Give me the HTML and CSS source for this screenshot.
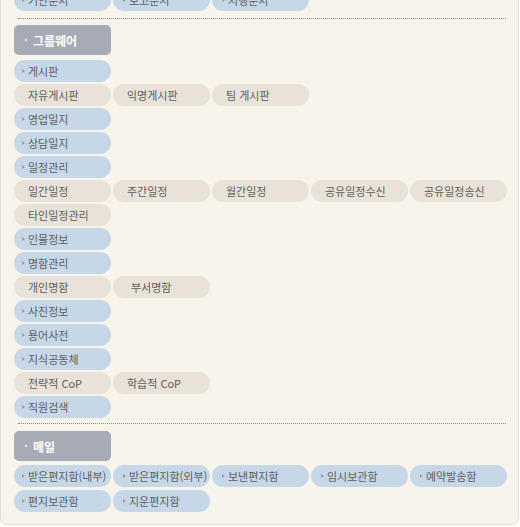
FILE: index.html
```html
<!DOCTYPE html>
<html lang="ko">
<head>
<meta charset="utf-8">
<link rel="stylesheet" href="styles.css">
</head>
<body>
<div class="panel">
  <div class="rows">
    <div class="row">
      <a class="pill blue"><span class="arr"></span>기안문서</a>
      <a class="pill blue"><span class="arr"></span>보고문서</a>
      <a class="pill blue"><span class="arr"></span>시행문서</a>
    </div>
  </div>

  <div class="sep"></div>

  <div class="section">
    <div class="head"><span class="dot"></span>그룹웨어</div>
    <div class="rows">
      <div class="row"><a class="pill blue"><span class="arr"></span>게시판</a></div>
      <div class="row">
        <a class="pill beige">자유게시판</a>
        <a class="pill beige">익명게시판</a>
        <a class="pill beige">팀 게시판</a>
      </div>
      <div class="row"><a class="pill blue"><span class="arr"></span>영업일지</a></div>
      <div class="row"><a class="pill blue"><span class="arr"></span>상담일지</a></div>
      <div class="row"><a class="pill blue"><span class="arr"></span>일정관리</a></div>
      <div class="row">
        <a class="pill beige">일간일정</a>
        <a class="pill beige">주간일정</a>
        <a class="pill beige">월간일정</a>
        <a class="pill beige">공유일정수신</a>
        <a class="pill beige">공유일정송신</a>
      </div>
      <div class="row"><a class="pill beige">타인일정관리</a></div>
      <div class="row"><a class="pill blue"><span class="arr"></span>인물정보</a></div>
      <div class="row"><a class="pill blue"><span class="arr"></span>명함관리</a></div>
      <div class="row">
        <a class="pill beige">개인명함</a>
        <a class="pill beige wide">부서명함</a>
      </div>
      <div class="row"><a class="pill blue"><span class="arr"></span>사진정보</a></div>
      <div class="row"><a class="pill blue"><span class="arr"></span>용어사전</a></div>
      <div class="row"><a class="pill blue"><span class="arr"></span>지식공동체</a></div>
      <div class="row">
        <a class="pill beige">전략적 CoP</a>
        <a class="pill beige">학습적 CoP</a>
      </div>
      <div class="row"><a class="pill blue"><span class="arr"></span>직원검색</a></div>
    </div>
  </div>

  <div class="sep"></div>

  <div class="section">
    <div class="head mailhead"><span class="dot"></span>메일</div>
    <div class="rows mail">
      <div class="row">
        <a class="pill blue"><span class="arr"></span>받은편지함(내부)</a>
        <a class="pill blue"><span class="arr"></span>받은편지함(외부)</a>
        <a class="pill blue"><span class="arr"></span>보낸편지함</a>
        <a class="pill blue"><span class="arr"></span>임시보관함</a>
        <a class="pill blue"><span class="arr"></span>예약발송함</a>
      </div>
      <div class="row">
        <a class="pill blue"><span class="arr"></span>편지보관함</a>
        <a class="pill blue"><span class="arr"></span>지운편지함</a>
      </div>
    </div>
  </div>
</div>
</body>
</html>
```

FILE: styles.css
```css
html, body {
  margin: 0;
  padding: 0;
  background: #ffffff;
}

body {
  font-family: "Noto Sans CJK KR", "Noto Sans", sans-serif;
  font-size: 11px;
  color: #5e5e5e;
}

.panel {
  width: 504px;
  margin-top: -11px;
  padding: 0 0 12px 13px;
  background: #f7f4ec;
  border: 1px solid #e2ded5;
  border-top: none;
  border-radius: 0 0 7px 7px;
  box-sizing: content-box;
}

.rows {
  display: flex;
  flex-direction: column;
  gap: 2px;
}

.row {
  display: flex;
  gap: 2px;
}

.pill {
  display: flex;
  align-items: center;
  width: 97px;
  height: 22px;
  border-radius: 11px;
  box-sizing: border-box;
  padding-left: 14px;
  white-space: nowrap;
  color: #5e5e5e;
  line-height: 1;
}

.pill.blue {
  background: #c6d8e8;
  padding-left: 8px;
}

.row .pill.blue + .pill.blue {
  padding-left: 10px;
}

.pill.beige {
  background: #e8e2d9;
}

.pill.beige.wide {
  padding-left: 18px;
}

.arr {
  display: inline-block;
  width: 0;
  height: 0;
  border-top: 2.5px solid transparent;
  border-bottom: 2.5px solid transparent;
  border-left: 3px solid #9a9ea4;
  margin-right: 3px;
}

.sep {
  margin: 7px 12px 6px 4px;
  border-top: 1px dotted #8a8a8a;
}

.head {
  display: flex;
  align-items: center;
  width: 97px;
  height: 30px;
  box-sizing: border-box;
  padding-left: 11px;
  background: #a7abb6;
  border-radius: 5px;
  color: #ffffff;
  font-size: 12px;
  font-weight: bold;
  margin-bottom: 5px;
}

.head.mailhead {
  margin-bottom: 4px;
}

.dot {
  width: 2px;
  height: 2px;
  background: #ffffff;
  border-radius: 1px;
  margin-right: 6px;
}

.section + .sep {
  margin-top: 5px;
  margin-bottom: 7px;
}

.rows.mail {
  gap: 3px;
}
```
